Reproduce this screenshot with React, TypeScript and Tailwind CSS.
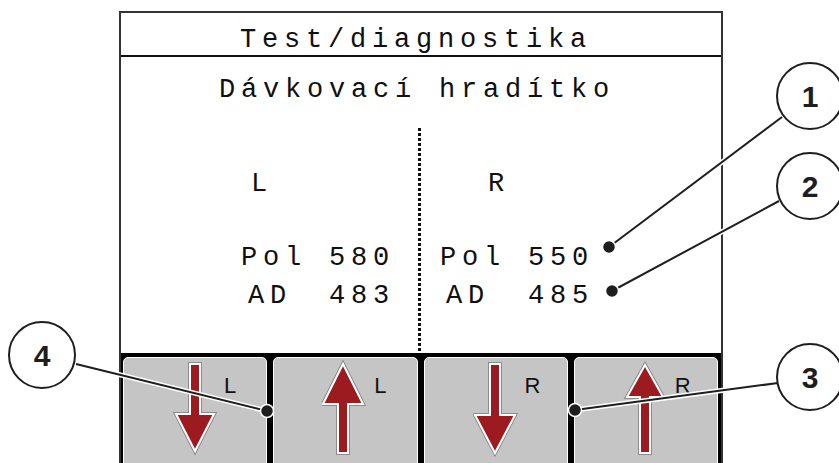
const mono =
  "font-['Liberation_Mono',monospace] text-[27px] leading-[26px] tracking-[5.8px] text-[#101010] whitespace-pre";

function Arrow({ dir, cx, top, head, end, hw }: { dir: 'up' | 'down'; cx: number; top: number; head: number; end: number; hw: number }) {
  const s = 5;
  const pts =
    dir === 'down'
      ? [
          [cx - s, top],
          [cx + s, top],
          [cx + s, head],
          [cx + hw, head],
          [cx, end],
          [cx - hw, head],
          [cx - s, head],
        ]
      : [
          [cx, top],
          [cx + hw, head],
          [cx + s, head],
          [cx + s, end],
          [cx - s, end],
          [cx - s, head],
          [cx - hw, head],
        ];
  const p = pts.map((q) => q.join(',')).join(' ');
  return (
    <svg width="46" height="100" viewBox="0 0 46 100" className="ml-[48px] shrink-0">
      <polygon points={p} fill="none" stroke="#8c8c8c" strokeWidth="4" strokeLinejoin="miter" />
      <polygon points={p} fill="#9b1b20" stroke="#ffffff" strokeWidth="2" strokeLinejoin="miter" />
    </svg>
  );
}

function SoftKey({ children, label }: { children: React.ReactNode; label: string }) {
  return (
    <div className="flex-1 h-[120px] bg-[#c5c5c5] border border-white rounded-[5px] flex items-start">
      {children}
      <span className="ml-[6px] mt-[17px] text-[22px] leading-none font-['Liberation_Sans',Arial,sans-serif] text-[#111]">
        {label}
      </span>
    </div>
  );
}

function Callout({ cx, cy, n }: { cx: number; cy: number; n: string }) {
  return (
    <g>
      <circle cx={cx} cy={cy} r="33" fill="#fff" stroke="#1e1e1e" strokeWidth="2" />
      <text
        x={cx}
        y={cy + 11}
        textAnchor="middle"
        fontFamily="'Liberation Sans', Arial, sans-serif"
        fontWeight="700"
        fontSize="30"
        fill="#1e1e1e"
      >
        {n}
      </text>
    </g>
  );
}

function Leader({ x1, y1, x2, y2 }: { x1: number; y1: number; x2: number; y2: number }) {
  return (
    <g>
      <line x1={x1} y1={y1} x2={x2} y2={y2} stroke="#fff" strokeWidth="5" />
      <line x1={x1} y1={y1} x2={x2} y2={y2} stroke="#1e1e1e" strokeWidth="2" />
      <circle cx={x2} cy={y2} r="6.5" fill="#1e1e1e" stroke="#fff" strokeWidth="1.5" />
    </g>
  );
}

export default function App() {
  return (
    <div className="relative w-[839px] h-[463px] overflow-hidden bg-white">
      <div className="ml-[119px] mt-[11px] w-[604px] h-[470px] border-2 border-[#333] flex flex-col">
        <div className="h-[44px] border-b-2 border-[#111] pt-[14px] pl-[119px]">
          <div className={mono}>Test/diagnostika</div>
        </div>

        <div className="h-[296px] flex flex-col">
          <div className={`${mono} pt-[20px] pl-[98px]`}>Dávkovací hradítko</div>

          <div className="flex flex-1">
            <div className="w-[297px] flex flex-col">
              <div className={`${mono} mt-[68px] pl-[130px]`}>L</div>
              <div className={`${mono} mt-[48px] pl-[120px]`}>Pol 580</div>
              <div className={`${mono} mt-[12px] pl-[120px] flex`}>
                <span className="w-[88px] pl-[7px]">AD</span>
                <span>483</span>
              </div>
            </div>
            <div className="w-[3px] mt-[25px] bg-[repeating-linear-gradient(to_bottom,#111_0_3px,transparent_3px_5px)]" />
            <div className="flex-1 flex flex-col">
              <div className={`${mono} mt-[68px] pl-[67px]`}>R</div>
              <div className={`${mono} mt-[48px] pl-[19px]`}>Pol 550</div>
              <div className={`${mono} mt-[12px] pl-[19px] flex`}>
                <span className="w-[88px] pl-[6px]">AD</span>
                <span>485</span>
              </div>
            </div>
          </div>
        </div>

        <div className="flex-1 bg-black pt-[4px] pl-[2px] pr-[3px] flex gap-[6px]">
          <SoftKey label="L">
            <Arrow dir="down" cx={23} top={6} head={56} end={93} hw={19} />
          </SoftKey>
          <SoftKey label="L">
            <Arrow dir="up" cx={21} top={6} head={46} end={95} hw={20} />
          </SoftKey>
          <SoftKey label="R">
            <Arrow dir="down" cx={22} top={6} head={57} end={95} hw={20} />
          </SoftKey>
          <SoftKey label="R">
            <Arrow dir="up" cx={22} top={7} head={39} end={95} hw={18} />
          </SoftKey>
        </div>
      </div>

      <svg className="absolute inset-0 pointer-events-none" width="839" height="463" viewBox="0 0 839 463">
        <Leader x1={782} y1={117} x2={609} y2={247} />
        <Leader x1={779} y1={201} x2={612} y2={291} />
        <Leader x1={778} y1={383} x2={575} y2={410} />
        <Leader x1={76} y1={364} x2={267} y2={411} />
        <Callout cx={810} cy={96} n="1" />
        <Callout cx={810} cy={186} n="2" />
        <Callout cx={810} cy={377} n="3" />
        <Callout cx={42} cy={355} n="4" />
      </svg>
    </div>
  );
}
